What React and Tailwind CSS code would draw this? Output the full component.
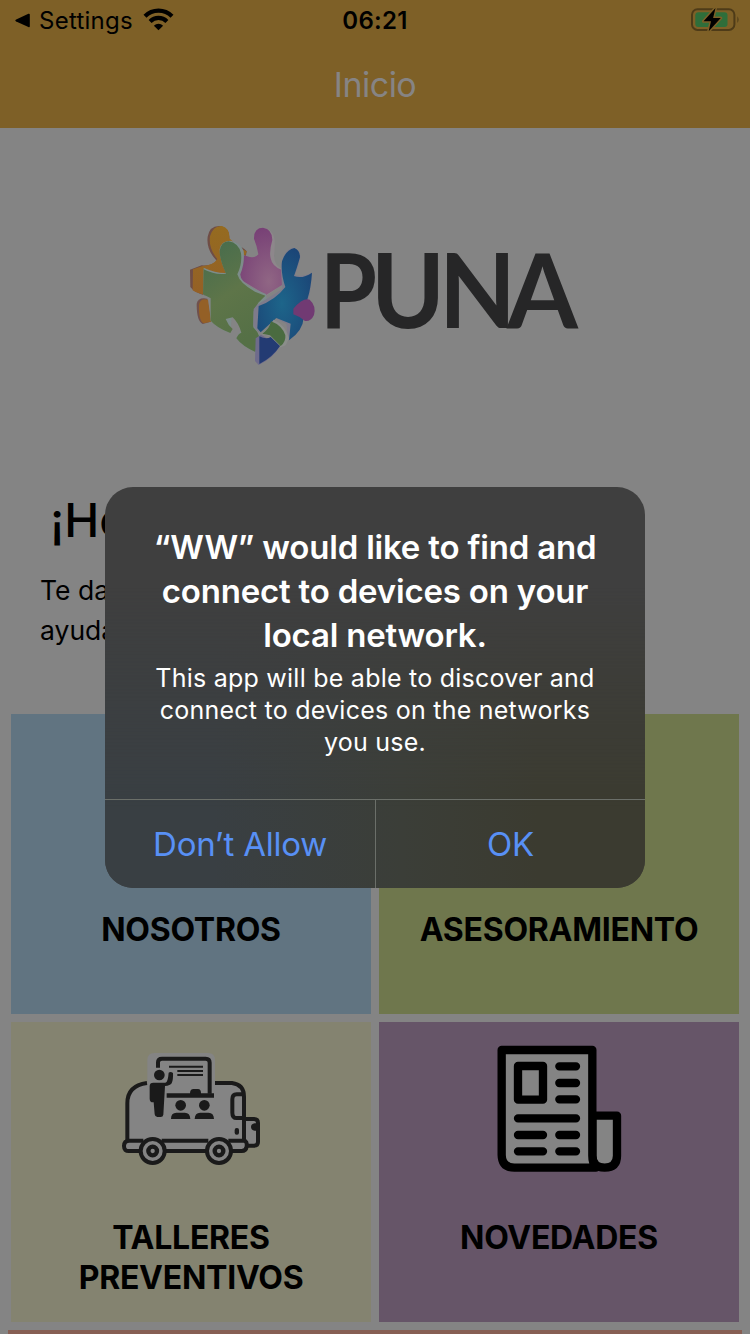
import React from "react";

function BackArrow() {
  return (
    <svg className="ml-[15px] h-[15px] w-[15px] shrink-0" viewBox="0 0 15 15">
      <path d="M1.2 6.6 13.4.8Q14.8.3 14.8 1.8V13.2Q14.8 14.7 13.4 14.1L1.2 8.6Q-.6 7.6 1.2 6.6Z" fill="#000" />
    </svg>
  );
}

function WifiIcon() {
  return (
    <svg className="h-[24px] w-[31px] shrink-0" viewBox="0 0 31 24">
      <g fill="none" stroke="#000" strokeWidth="4.2">
        <path d="M2 8.2A19 19 0 0 1 29 8.2" />
        <path d="M7.1 13.4A12 12 0 0 1 23.9 13.4" />
      </g>
      <path d="M15.5 22.2 10.9 17.7A6.6 6.6 0 0 1 20.1 17.7Z" fill="#000" />
    </svg>
  );
}

function BatteryIcon() {
  return (
    <svg className="h-[26px] w-[50px]" viewBox="0 0 50 26">
      <rect x="2" y="2.3" width="42.4" height="20.6" rx="5.5" fill="none" stroke="#4e3b18" strokeWidth="2" />
      <path d="M47.4 9.2Q49.8 12.6 47.4 16Z" fill="#4e3b18" />
      <rect x="5.3" y="5.3" width="32.2" height="14.8" rx="3" fill="#2f6e3a" />
      <path d="M25.5 1 13.5 14.3H21L18.7 24.2 30.8 11H23.1Z" fill="#000" stroke="#7e6027" strokeWidth="3" paintOrder="stroke" strokeLinejoin="round" />
    </svg>
  );
}

function PuzzleLogo() {
  return (
    <svg className="h-[160px] w-[410px]" viewBox="0 0 410 160">
      <defs>
        <linearGradient id="amber" x1="0" y1="0" x2="0" y2="1">
          <stop offset="0" stopColor="#956b20" />
          <stop offset="1" stopColor="#946026" />
        </linearGradient>
        <linearGradient id="green" x1="0" y1="0" x2="0.4" y2="1">
          <stop offset="0" stopColor="#446b4d" />
          <stop offset="0.55" stopColor="#5e7549" />
          <stop offset="1" stopColor="#557046" />
        </linearGradient>
        <radialGradient id="pink" cx="0.7" cy="0.8" r="0.8">
          <stop offset="0" stopColor="#906684" />
          <stop offset="1" stopColor="#784176" />
        </radialGradient>
        <radialGradient id="blue" cx="0.45" cy="0.6" r="0.65">
          <stop offset="0" stopColor="#1d658a" />
          <stop offset="1" stopColor="#1b4476" />
        </radialGradient>
      </defs>
      <g transform="scale(.33333)">
        <path d="M110 137Q78 104 83 65Q89 31 120 33Q150 39 148 71Q144 89 158 94Q188 91 200 109L188 180 78 242Q43 233 31 216L30 164 65 151Q97 153 110 137Z" fill="#6f4d46" />
        <path d="M112 132Q85 100 90 64Q100 31 126 33Q150 40 148 70L180 100 200 109 178 180 80 241Q51 235 38 226L39 163 68 153Q100 151 112 132Z" fill="url(#amber)" />
        <path d="M50 267Q53 246 82 251L92 320 68 327Q50 319 50 267Z" fill="#70504c" />
        <path d="M57 268Q62 248 84 254L93 320 71 325Q55 318 57 268Z" fill="#946026" />
        <path d="M185 118Q222 135 235 118Q231 93 222 72Q221 38 249 38Q281 42 284 75Q285 108 282 122Q283 149 304 161L306 210 258 243 175 190Z" fill="#8d878b" />
        <path d="M185 118Q222 135 235 118Q231 93 222 72Q221 38 249 38Q277 42 277 75Q267 110 272 130Q277 155 304 164L306 210 258 240 175 190Z" fill="url(#pink)" />
        <path d="M71 158Q108 175 138 174Q119 135 119 103Q123 78 151 77Q181 81 191 108 195 144 181 178Q180 201 225 223L258 237 260 252 235 275 232 350 244 366 226 412Q187 395 169 370 174 357 183 350 177 312 155 307L151 354Q113 342 92 317V250L70 239Z" fill="#7d8c8a" />
        <path d="M71 163Q106 181 138 176Q119 135 119 108Q123 80 146 79Q176 84 183 115 187 147 172 178Q179 205 225 230L256 242 235 263 221 289 220 337 232 351 238 365 226 411Q187 394 169 370 174 357 184 353 176 324 158 307L137 312Q144 330 158 342L151 354Q111 339 92 317V250L69 238Z" fill="url(#green)" />
        <path d="M231 270 307 222Q306 198 303 150Q311 107 337 98Q359 102 361 125 357 151 345 181 370 187 396 173 393 216 387 249 Q399 272 371 308 370 345 325 377L319 326 278 305 235 352 220 333 221 282Z" fill="#7e7b8b" />
        <path d="M236 273Q286 255 316 216Q302 176 306 139Q317 105 343 99Q360 105 360 127 350 162 342 183 366 193 396 173 393 218 383 250L371 308Q369 346 327 376L332 326 289 309 242 352 232 340Z" fill="url(#blue)" />
        <path d="M340 281Q369 247 389 254Q409 272 402 300Q393 320 375 318 361 305 340 298Z" fill="#713a73" />
        <path d="M244 357Q267 340 281 314Q317 330 327 370L317 391 302 397Q285 380 270 363Z" fill="#8b8e8b" />
        <path d="M247 356Q269 341 273 319Q306 331 316 361 318 381 302 393L270 361Z" fill="#4a6b40" />
        <path d="M227 370 243 359 300 393Q279 430 236 450L225 438Z" fill="#6f6b8c" />
        <path d="M238 364Q259 374 272 366L300 393Q278 427 238 447Z" fill="#233b73" />
      </g>
      <text y="113" fill="#262627" fontFamily="Lato" fontWeight="700" fontSize="103">
        <tspan x="140" textLength="57" lengthAdjust="spacingAndGlyphs">P</tspan>
        <tspan x="191" textLength="74" lengthAdjust="spacingAndGlyphs">U</tspan>
        <tspan x="259" textLength="77" lengthAdjust="spacingAndGlyphs">N</tspan>
        <tspan x="327" textLength="71" lengthAdjust="spacingAndGlyphs">A</tspan>
      </text>
    </svg>
  );
}

function VanIcon() {
  return (
    <svg className="mt-[18px] ml-[99px] h-[135px] w-[160px]" viewBox="0 0 480 405">
      <path d="M112 130V60Q112 39 133 39H294Q315 39 315 60V130H370Q402 135 402 165V236H444V318H410L395 332H55L42 318 52 300V180Q60 138 112 130Z" fill="#848484" />
      <g fill="none" stroke="#1a1a1a" strokeWidth="12" strokeLinejoin="round">
        <path d="M111 129Q52 137 52 190V302M315 129H366Q402 134 402 170V302" />
        <path d="M100 302H58Q42 302 42 318T58 333H100M155 302H295M155 333H295M355 302H402Q412 303 410 320 408 333 395 333H355" />
        <path d="M402 163H380Q367 163 367 178V218Q367 234 380 234H402M408 237H432Q444 237 444 249V306Q444 317 432 317H408" />
        <path d="M144 83V67Q144 56 156 56H287Q299 56 299 68V161" />
      </g>
      <path d="M170 160H240Q240 147 251 147H264Q273 147 273 160H312V173H170Z" fill="#1a1a1a" />
      <path d="M177 80H279M202 93H279M202 105H279" stroke="#1a1a1a" strokeWidth="6" />
      <circle cx="148" cy="105" r="16" fill="#1a1a1a" />
      <path d="M119 138Q119 128 130 128H166Q174 126 176 98Q182 93 189 99Q190 119 185 130 181 137 165 138L160 224Q159 231 152 231H142Q135 231 134 223L131 187Q119 188 119 176Z" fill="#1a1a1a" />
      <g fill="#1a1a1a">
        <circle cx="212" cy="196" r="16" />
        <circle cx="283" cy="196" r="16" />
        <path d="M183 237Q183 217 201 218H223Q240 217 241 237ZM254 237Q255 217 272 218H294Q311 217 312 237Z" />
        <rect x="374" y="264" width="13" height="20" rx="6" />
        <path d="M444 250V272H434Q423 270 423 261T434 250Z" />
      </g>
      {[128, 327].map((x) => (
        <g key={x}>
          <circle cx={x} cy="333" r="36" fill="#848484" stroke="#1a1a1a" strokeWidth="12" />
          <circle cx={x} cy="333" r="13" fill="#848484" stroke="#1a1a1a" strokeWidth="13" />
        </g>
      ))}
    </svg>
  );
}

function NewsIcon() {
  return (
    <svg className="mt-[13px] ml-[106px] h-[145px] w-[150px]" viewBox="0 0 450 435">
      <g stroke="#000" strokeWidth="25" strokeLinejoin="round" fill="#848484">
        <path d="M322 242H396V362Q396 397 359 398 322 397 322 362Z" />
        <path d="M50 45H322V362Q322 383 333 398H88Q51 398 50 360Z" />
        <path d="M99 93H174V194H99Z" />
      </g>
      <path d="M223 94H273M223 144H273M223 193H273M99 250H273M99 300H174M223 300H273M99 349H174M223 349H273" stroke="#000" strokeWidth="25" strokeLinecap="round" />
    </svg>
  );
}

function Tile({ color, icon, children }) {
  return (
    <section className={`h-[300px] w-[360px] ${color}`}>
      <div className="h-[196px] overflow-hidden">{icon}</div>
      <h2 className="text-center text-[32px] leading-[40px] font-bold tracking-[-0.25px]">{children}</h2>
    </section>
  );
}

function PermissionDialog() {
  return (
    <div
      role="alertdialog"
      className="absolute top-[487px] left-[105px] flex h-[401px] w-[540px] flex-col overflow-hidden rounded-[28px] bg-[#3f3f3f] text-white"
    >
      <div className="absolute inset-0 bg-linear-to-r from-[#393f43] from-20% via-[#3b3e38] via-55% to-[#3b3b30] to-80% mask-[linear-gradient(to_bottom,transparent_25%,black_80%)]" />
      <div className="relative flex h-[312px] flex-col items-center pt-[38px] whitespace-nowrap">
        <p className="text-center text-[33px] leading-[44px] font-semibold tracking-[-0.2px]">
          “WW” would like to find and<br />connect to devices on your<br />local network.
        </p>
        <p className="mt-[5px] text-center text-[25px] leading-[32px] tracking-[0.24px]">
          This app will be able to discover and<br />connect to devices on the networks<br />you use.
        </p>
      </div>
      <div className="relative flex flex-1 border-t border-[#6b6f69] text-[33px] tracking-[-0.25px] text-[#5890f5]">
        <button className="w-[271px] border-r border-[#6b6f69] pt-[2px]">Don’t Allow</button>
        <button className="flex-1 pt-[2px]">OK</button>
      </div>
    </div>
  );
}

export default function App() {
  return (
    <div className="relative h-[1334px] w-[750px] overflow-hidden bg-[#848484] font-['Inter',sans-serif] text-black">
      <header className="h-[128px] bg-[#7e6027]">
        <div className="grid h-[40px] grid-cols-3 items-center text-[24px]">
          <div className="flex items-center">
            <BackArrow />
            <span className="mr-[10px] ml-[9px] pt-[2px] tracking-[0.25px]">Settings</span>
            <WifiIcon />
          </div>
          <span className="pt-[2px] text-center font-semibold tracking-[0.3px]">06:21</span>
          <div className="flex justify-end pr-[10px]"><BatteryIcon /></div>
        </div>
        <h1 className="h-[88px] text-center text-[34px] leading-[90px] tracking-[-0.5px] text-[#868484]">Inicio</h1>
      </header>
      <div className="h-[367px] pt-[87px] pl-[180px]"><PuzzleLogo /></div>
      <div className="h-[219px] whitespace-nowrap">
        <h2 className="pl-[50px] text-[47px] leading-[49px] font-medium">¡Ho</h2>
        <p className="mt-[26px] pl-[40px] text-[26.5px] leading-[40px]">Te da<br />ayuda</p>
      </div>
      <main className="grid grid-cols-[360px_360px] gap-[8px] pl-[11px]">
        <Tile color="bg-[#617481]">NOSOTROS</Tile>
        <Tile color="bg-[#6f774d]">ASESORAMIENTO</Tile>
        <Tile color="bg-[#848370]" icon={<VanIcon />}>TALLERES<br />PREVENTIVOS</Tile>
        <Tile color="bg-[#665568]" icon={<NewsIcon />}>NOVEDADES</Tile>
      </main>
      <div className="mx-[8px] mt-[8px] h-[4px] bg-[#865f54]" />
      <PermissionDialog />
    </div>
  );
}
